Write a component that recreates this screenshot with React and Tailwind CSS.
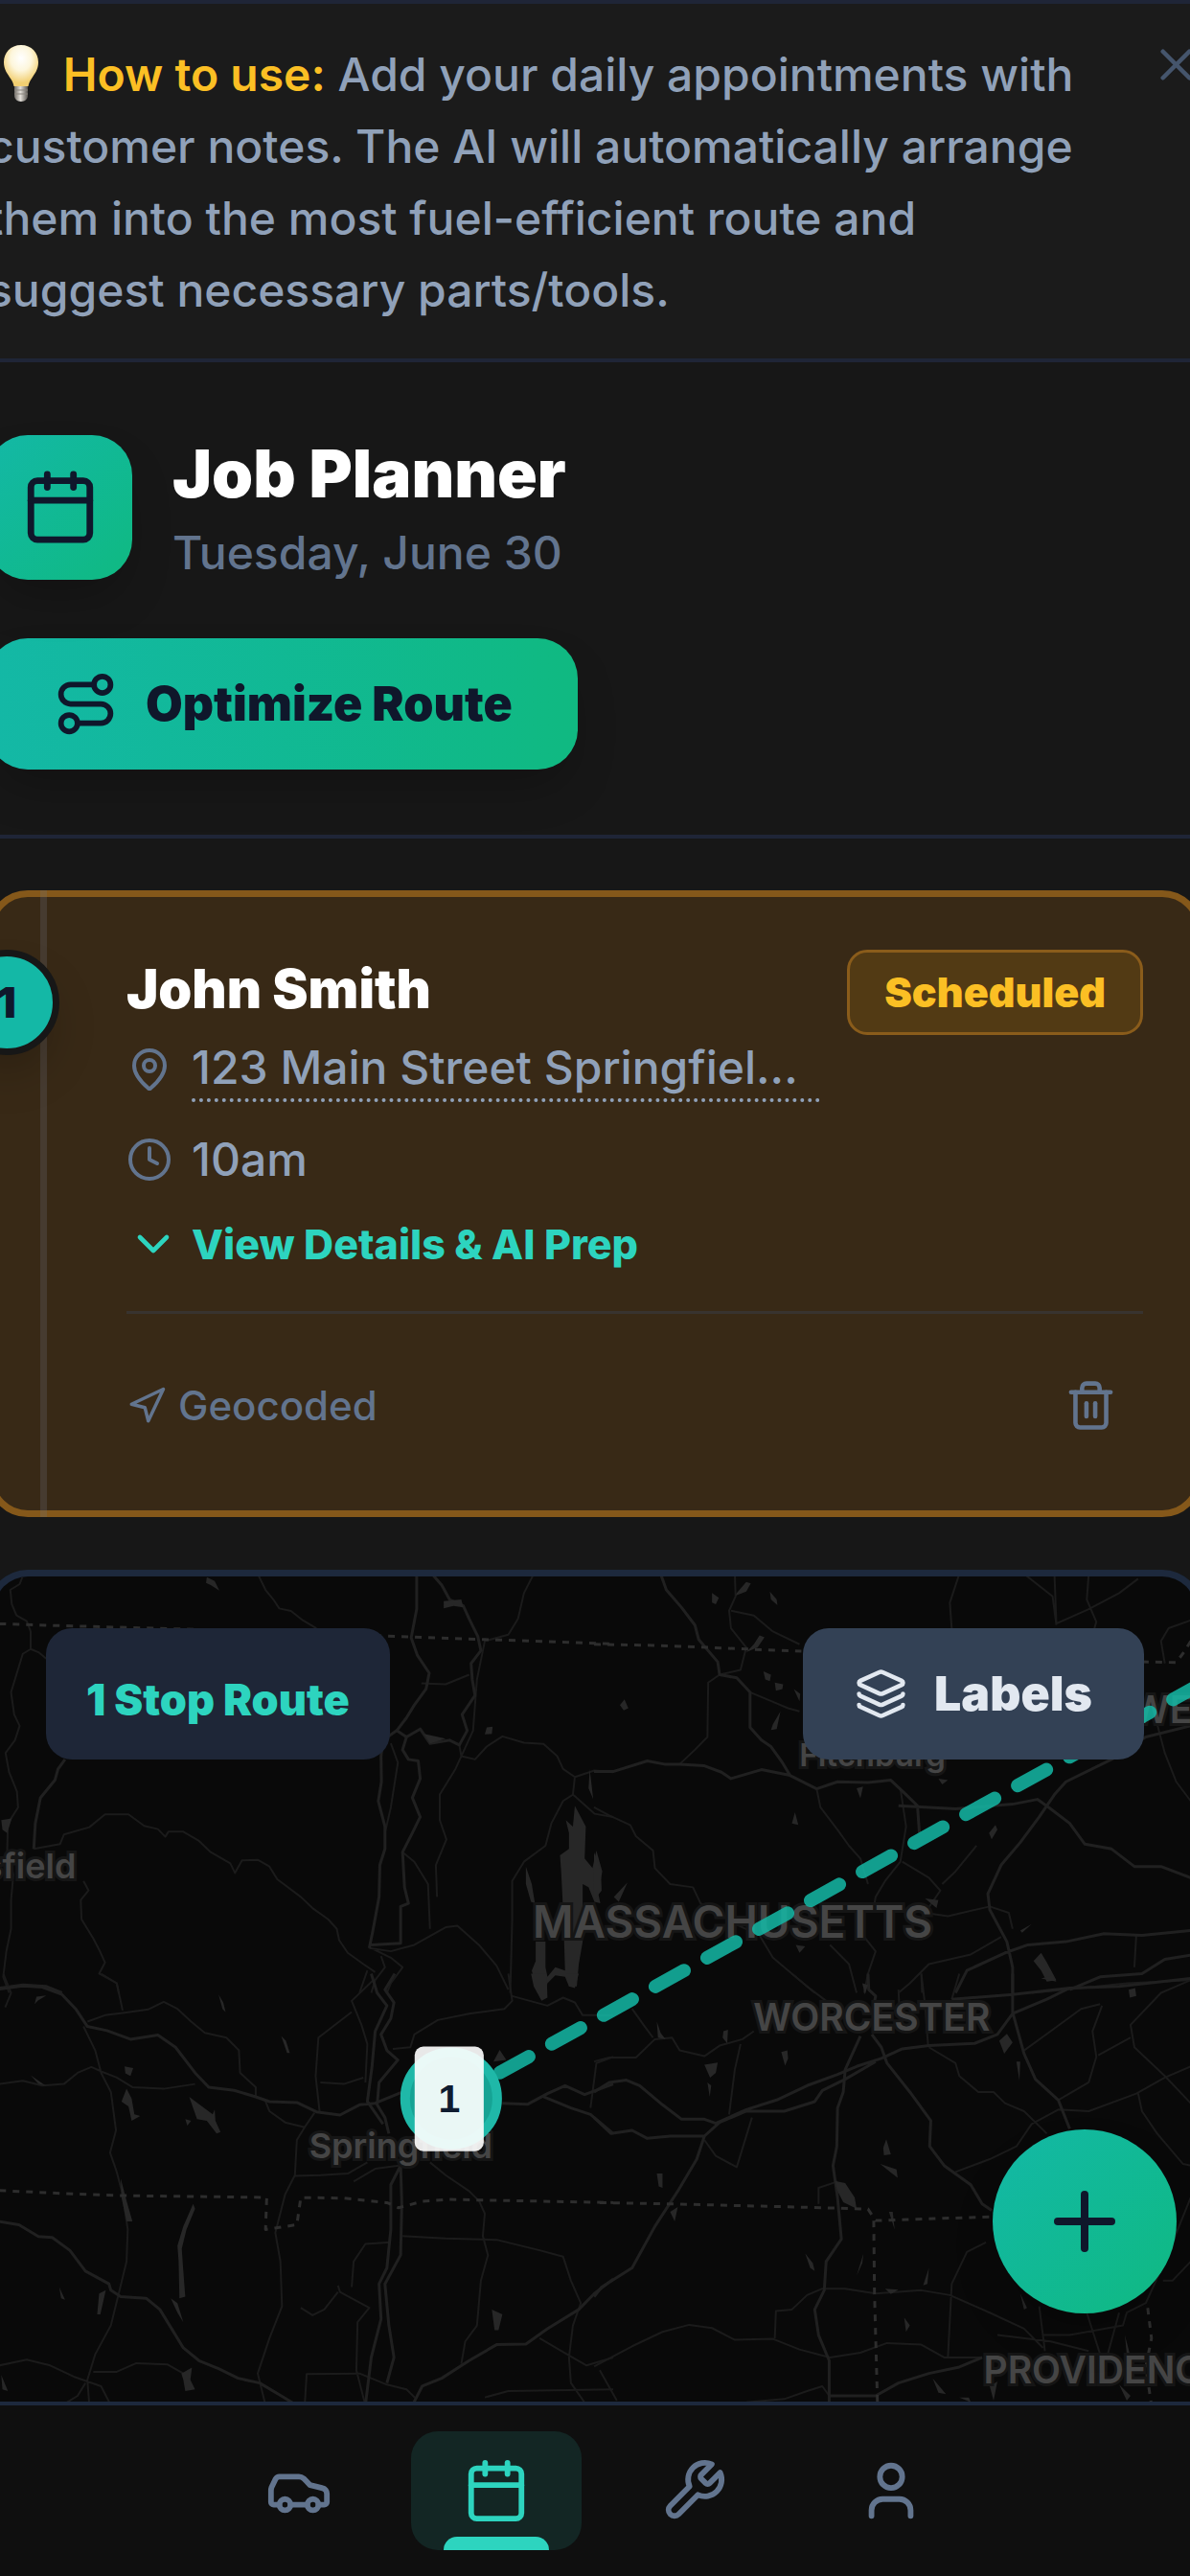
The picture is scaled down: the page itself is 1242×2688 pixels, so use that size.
import React from "react";
import {
  Calendar,
  Car,
  ChevronDown,
  Clock,
  Layers,
  MapPin,
  Navigation,
  Plus,
  Route,
  Trash2,
  User,
  X,
} from "lucide-react";

function WrenchIcon({ size = 24 }) {
  return (
    <svg
      width={size}
      height={size}
      viewBox="0 0 24 24"
      fill="none"
      stroke="currentColor"
      strokeWidth="2"
      strokeLinecap="round"
      strokeLinejoin="round"
      aria-hidden="true"
    >
      <path d="M14.7 6.3a1 1 0 0 0 0 1.4l1.6 1.6a1 1 0 0 0 1.4 0l3.77-3.77a6 6 0 0 1-7.94 7.94l-6.91 6.91a2.12 2.12 0 0 1-3-3l6.91-6.91a6 6 0 0 1 7.94-7.94l-3.76 3.76z" />
    </svg>
  );
}

const NAV_ITEMS = [
  { id: "vehicles", label: "Vehicles", icon: Car },
  { id: "planner", label: "Job planner", icon: Calendar },
  { id: "tools", label: "Tools", icon: WrenchIcon },
  { id: "account", label: "Account", icon: User },
];

// Base map in four tiles, each drawn in its own coordinate space.
const MAP_TILES = [
  {
    id: "nw",
    transform: "translate(0 1620) scale(0.40816 0.33333)",
    borders: "M0 226L130 231 540 245 980 264 1240 275 1568 289",
    major:
      "M1066 60V180L1052 270 1068 325 1098 380 1090 430 1060 480 1040 520 1015 560 980 590 975 640 976 720 968 780 985 860 985 930 972 980 970 1080 955 1180 945 1240M1105 70L1130 105 1150 150 1185 170 1200 210 1222 265 1230 310 1205 350 1208 400 1215 450 1182 510 1195 560 1175 605 1150 590 1100 600 1075 555 1040 580 1015 560M1040 580L1030 620 1045 650 1070 655 1075 710 1055 770 1075 830 1055 880 1030 940 1035 1050 1045 1100 1025 1110 1025 1225 950 1230M0 1365L60 1355 120 1360 160 1380M168 650L150 680 142 715 105 770 92 850 88 930",
    minor:
      "M62 70L52 102 28 120 32 165 44 200 70 218 80 250 80 305 60 320 45 380 30 440 38 510 52 545 40 590 16 630 25 690 45 750 48 800 22 850 20 940 36 1010 30 1090 30 1180 18 1250 10 1330 25 1380M80 305L100 315 120 335M88 930L155 915 165 885 230 862 270 822 330 822 370 858 405 868 424 892 432 876 470 876 510 905 540 940 590 975 602 1005 620 966 660 964 690 985 710 1025 770 1080 800 1115 840 1150 862 1180 868 1215 890 1255 930 1290 960 1315M660 70L680 120 700 150 715 178 745 186 775 215 810 240M1175 605L1180 640 1215 650 1245 610 1285 578 1340 598 1390 602 1425 640 1440 680 1470 705 1520 685 1568 690M945 1240L1000 1250 1060 1230 1140 1175 1170 1170 1225 1230 1270 1295 1300 1370M1365 70L1340 130 1325 210 1300 260 1240 280 1220 400 1210 560 1165 680 1125 760 1125 840 1142 900 1115 980 1118 1080M1470 705L1465 760 1440 780 1410 850 1395 920 1340 970 1310 1030 1310 1150 1305 1380M1465 760L1520 820 1568 830M950 1240L1000 1270 1030 1300 1000 1350 990 1380M975 1265L985 1300 960 1340 950 1380M940 1310L920 1380M215 1030L228 1060 208 1090 210 1150 240 1210 255 1245 270 1285 255 1320 300 1350 305 1380M1030 940L1060 970 1095 1040 1100 1180M1000 600L1018 660 1000 800 985 880M1200 385L1140 415 1078 412",
    water:
      "M1470 795L1498 860 1495 960 1515 990 1525 935 1540 1000 1530 1070 1535 1100 1520 1095 1505 1050 1490 1040 1490 1220 1480 1290 1475 1360 1455 1360 1445 1330 1420 1325 1400 1350 1395 1380H1375L1360 1310 1370 1280V1220H1395V1300L1400 1330 1420 1300 1445 1310 1440 1120 1435 1000 1432 950 1455 930 1455 880 1447 840 1465 860ZM1345 985L1360 1040 1368 1100 1358 1095 1345 1040ZM530 80L550 92 562 122 540 105 528 98ZM5 840L32 835 20 880 8 870ZM1508 680L1517 775 1505 740ZM1245 550L1260 548 1258 570 1240 572ZM1085 570L1140 585 1100 600ZM1135 155L1180 150 1185 175 1160 170 1135 178Z",
  },
  {
    id: "ne",
    transform: "translate(620 1620) scale(0.39668 0.33333)",
    borders: "M0 290L170 294 320 301 460 308 545 312M1440 345L1530 347 1550 315 1568 280",
    major:
      "M175 70L190 120 230 175 265 230 275 275 325 345 330 385 375 395 410 440 410 550 440 590 465 610 495 660 515 700 585 742 640 720 720 722 780 715 820 760 850 795 855 880M0 688L50 688 140 655 185 665 225 665 290 670 335 690 360 710 440 682 515 700M800 795L950 805 1100 790 1165 775 1195 800 1250 850 1290 915 1360 930 1420 985 1490 985 1568 1020M1568 545L1450 580 1360 650 1240 720 1210 760 1170 830 1120 910 1070 980 1035 1070 1040 1120 1085 1220 1100 1300 1100 1380M1568 1185L1440 1200 1340 1195 1240 1220 1140 1230 1080 1255 980 1310 950 1380M1568 1262L1500 1275 1440 1320 1330 1330 1250 1370",
    minor:
      "M370 70L372 140 355 185 360 240 400 300 385 370 330 385 300 410 298 580 265 620 225 665M360 185L420 200 470 250 540 290M0 800L40 825 95 855 110 890 155 935 160 990 200 1040 260 1050 280 1100 330 1130 380 1170 435 1200 470 1270 540 1340 580 1380M585 742L595 800 640 870 670 920 700 960 720 1040M410 440L460 465 510 490 540 500M1130 70L1205 140 1215 230M1210 70L1215 225 1300 180 1380 130 1430 85M1300 70L1295 150 1320 220 1315 240M960 70L935 160 940 240M1480 540L1500 630 1530 720 1568 780M1568 215L1510 240 1490 280 1500 350M805 740L820 860 805 970 765 1030 740 1080 735 1115M810 970L880 1020 910 1060 870 1130 930 1140 1040 1110 1090 1130 1100 1180M1005 920L950 1000 915 1040M1070 1205L990 1260 880 1290 830 1350 800 1380M1568 1340L1400 1350 1280 1365 1150 1380M700 1190L740 1250 720 1320 710 1380M620 1230L670 1290 690 1380M1425 1200L1420 1300M860 1320L862 1380",
    water:
      "M375 130L400 95 412 100 400 125 372 138ZM310 130L328 145 320 165 310 160ZM462 125L480 150 482 168 465 150ZM445 375L465 385 462 405 450 400ZM475 410L497 415 495 430 478 435ZM420 290L435 262 448 268 430 300 400 315ZM470 540L490 500 480 555 465 558ZM520 850L528 815 537 855ZM68 480L80 462 90 490 78 497ZM1038 880L1055 855 1060 870 1045 900ZM905 710L930 715 915 728ZM870 1085L905 1090 900 1115ZM1155 1280L1175 1255 1190 1285 1215 1340 1190 1345 1175 1310ZM530 1230L555 1235 540 1255ZM0 940L18 1000 20 1060 0 1090ZM52 1080L88 1035 65 1095ZM690 740L707 735 700 772ZM1120 1185L1150 1165 1125 1192ZM525 430L542 445 540 468Z",
  },
  {
    id: "sw",
    transform: "translate(0 2060) scale(0.40816 0.33333)",
    borders:
      "M0 678L160 687 320 694 640 699 683 700 680 800 760 785 770 700 880 702 990 716 1020 732 1080 712 1150 706 1568 716",
    major:
      "M0 48L60 38 110 42 160 65 195 110 225 165 275 178 335 205 405 192 450 230 500 310 535 355 600 365 655 385 690 400 760 403 810 432 870 442 920 410 960 405 1030 370M0 775L50 785 100 822 135 825 180 865 220 930 280 970 285 990 310 1010 375 1015 410 1050 440 1110 470 1170 510 1210 560 1235 610 1265 665 1280 720 1320 760 1350M1010 0L985 50 1008 90 1000 140 975 190 990 240 1018 270 970 340 965 410 985 450 995 500M950 0L965 60 990 100 960 180 952 290 940 400 980 470M1025 600L1000 660 1000 800 990 920 970 970 975 1080 950 1200 935 1350M1025 600L1028 720 1025 880 985 970 995 1100 1008 1200 990 1280M1568 955L1520 1000 1480 1050 1400 1110 1345 1158 1270 1160 1200 1210 1130 1265 1080 1290 1055 1350M1285 405L1350 408 1400 375 1445 350 1495 378 1568 345M1390 385L1460 420 1510 440 1568 500",
    minor:
      "M225 150L270 130 320 122 380 112 420 88 455 110 490 150 525 185 580 200 612 240 615 310 655 355 655 385M215 165L245 240 260 310 285 370 298 490 283 560 300 620 315 690 328 800 325 900 305 1000 285 1100 245 1190 225 1270 230 1350M0 345L60 335 110 350 165 345 200 310 235 292 265 308 300 325 340 355 420 360 500 345M680 400L690 430 730 465 780 480 805 435M780 480L760 520 755 630 730 690 705 810 718 900 722 1040 690 1140 660 1250 680 1350M240 1245L300 1245 350 1218 430 1222 470 1250M0 1225L70 1207 130 1225 190 1260 260 1290 285 1350M220 1280L200 1320 160 1350M955 20L900 85 925 160 940 220 935 340M900 120L815 200 808 320 818 430M820 340L880 345 930 325M755 632L820 630 890 625 940 590M905 650L960 610 1020 600M1030 820L1140 828 1270 832 1380 865 1440 885 1460 960 1485 1030 1465 1100 1455 1200 1460 1280 1500 1350M1100 590L1140 630 1200 680 1225 710 1240 750 1235 820 1248 880 1230 960 1220 1100 1190 1150 1180 1220M865 975L870 995 945 1045 915 1090 912 1240 935 1350M865 995L830 1050 800 1068 770 1045M780 1350L785 1252 920 1250 990 1285 1040 1300 1065 1330M1000 840L935 845 905 900 900 980M1005 235L1050 230 1060 190 1120 145 1200 125 1290 110 1310 85 1300 0M1310 70L1400 100 1440 75 1470 90 1490 130 1568 130M1380 1140L1450 1190 1500 1225 1568 1200M1240 1325L1300 1305 1568 1300M260 0L300 30 315 115M10 0L30 60 15 105M1568 260L1525 280 1510 420",
    water:
      "M495 720L500 735 478 800 466 860 470 930 475 1010 460 1015 458 900 455 850 470 790ZM325 360L338 390 345 440 360 445 338 460 330 415 312 400ZM485 385L545 440 550 425 552 460 565 495 555 500 530 460 505 455ZM310 640L325 710 340 775 325 775 312 700ZM720 195L732 210 742 248 735 248ZM560 65L572 90 578 120 570 110ZM320 290L342 295 335 320 322 312ZM90 95L95 72 120 68 98 85ZM80 318L118 350 100 345ZM465 1250L492 1232 488 1270 500 1300 475 1305 470 1270ZM5 1255L22 1305 8 1300ZM1258 1050L1285 1065 1275 1115 1265 1115ZM1262 275L1278 238 1295 270ZM1358 0H1398L1400 75 1385 85 1365 40ZM1450 0H1480L1470 45 1455 40ZM438 1015L455 1030 470 1090 455 1060ZM250 1065L255 1000 272 990 258 1065ZM153 980L168 1020 158 1015ZM475 455L490 460 480 475Z",
  },
  {
    id: "se",
    transform: "translate(620 2060) scale(0.39668 0.33333)",
    borders:
      "M15 716L200 720 440 727 600 732 720 736 740 772 1048 760M735 772L737 1000 745 1350M1455 1045L1465 1140 1450 1230 1465 1350",
    major:
      "M0 370L40 340 85 333 120 350 180 410 230 455 290 455 320 468 400 425 480 395 560 350 640 315 690 290 755 265 810 235 880 225 1000 218 1060 190 1100 125 1190 80 1250 45 1380 40 1568 15M0 450L45 500 100 490 140 515 200 508 290 508 330 465 400 430 500 430 580 400 600 365 660 330 740 275M290 508L270 580 220 680 160 790 100 920 20 980 0 1010M700 195L660 300 655 370 640 420 638 540 628 600 640 700 650 830 610 900 605 990 580 1050 590 1130 618 1210 618 1350M720 0L722 50 740 70 735 100M730 190L755 230 770 280 830 370 885 460 882 540 920 600 990 660 1020 720 1045 740M1100 0L1100 120 1130 250 1160 330 1220 395 1250 485M940 80L1100 65 1250 45M620 1320L740 1320 800 1280 880 1250 960 1230 1020 1200",
    minor:
      "M290 520L320 570 375 605 415 450M1220 395L1300 340 1320 260 1310 180 1335 100M1568 20L1490 60 1410 160 1420 230 1500 320 1568 405M1568 290L1500 325 1425 375 1300 430 1220 425 1150 470 1110 540 1040 580 950 620M880 230L950 280 960 320 1010 370 1050 370 1080 405 1130 430 1190 500M1430 375L1440 430 1480 500 1548 595 1568 600M0 275L40 262 110 262 160 205 205 200 225 240 290 258 330 225 390 205 420 180M385 220L370 300 355 440M100 110L130 160 155 200M520 0L560 40 610 85M0 1228L100 1165 180 1120 250 1098 310 1108 370 1145 470 1142 540 1175 620 1200 700 1185 770 1155 860 1160 920 1200 1020 1200M475 1140L478 1055 520 1050 560 1005 600 985 660 985 740 1000 860 990 935 1005 1040 1060 1130 1110 1180 1170M400 1340L500 1330 560 1305 600 1290 618 1320M1030 840L980 870 940 970 930 1200M1170 1040L1185 1180M1295 1060L1330 1190M1380 1060L1350 1190M1568 700L1500 900 1450 1030 1400 1060 1390 1100 1250 1130 1180 1130M1568 900L1520 960 1495 960M1060 1130L1200 1150 1300 1180M1130 240L1200 180 1280 110 1330 95M1325 255L1410 200M590 720L590 670 640 650M800 50L805 170M860 0L870 100 878 225M960 0L940 80M15 1240L60 1335",
    water:
      "M165 150L175 185 188 205 168 200ZM340 180L352 175 350 218 338 200ZM290 285L325 278 320 310 305 325ZM298 340L308 350 304 385ZM492 245L508 240 510 265 502 288ZM760 545L768 518 780 565 762 568ZM752 595L795 612 798 638 780 622ZM632 648L660 655 685 700 690 735 655 715 640 680ZM1065 210L1085 188 1100 215 1078 250ZM1110 275L1120 275 1118 335ZM165 625L180 625 180 670 170 665ZM200 745L220 730 212 775ZM775 745L785 745 790 800ZM555 875L575 905 580 930 568 920ZM690 945L708 875 705 905ZM865 975L880 920 876 970ZM765 985L800 988 780 1002ZM815 1075L830 1100 820 1120ZM1120 1000L1138 1045 1130 1050ZM1395 1130L1408 1190 1400 1190ZM890 1265L925 1315 905 1310ZM1040 1290L1060 1275 1050 1335ZM1380 1285L1410 1320 1400 1335ZM705 30L720 35 712 65ZM1405 50L1422 45 1425 70 1408 75ZM960 1325L985 1325 990 1340ZM1175 15L1205 5 1215 25Z",
  },
];

const PLACES = [
  { name: "Pittsfield", x: 80, y: 1961, anchor: "end", className: "text-[36px] font-semibold" },
  { name: "Fitchburg", x: 834, y: 1844, anchor: "start", className: "text-[33px] font-semibold" },
  { name: "LOWELL", x: 1130, y: 1799, anchor: "start", className: "text-[39px] font-semibold" },
  { name: "MASSACHUSETTS", x: 556, y: 2023, anchor: "start", className: "text-[46px] font-semibold" },
  { name: "WORCESTER", x: 786, y: 2119, anchor: "start", className: "text-[39px] font-semibold" },
  { name: "Springfield", x: 323, y: 2252, anchor: "start", className: "text-[36px] font-semibold" },
  { name: "PROVIDENCE", x: 1026, y: 2487, anchor: "start", className: "text-[39px] font-semibold" },
];

function BulbIcon() {
  return (
    <svg viewBox="0 0 64 64" className="inline h-16 w-[66px] align-[-14px]" aria-hidden="true">
      <defs>
        <radialGradient id="bulbGlass" cx="0.5" cy="0.32" r="0.6">
          <stop offset="0" stopColor="#ffffff" />
          <stop offset="0.5" stopColor="#fdf6dc" />
          <stop offset="1" stopColor="#f2cf72" />
        </radialGradient>
        <linearGradient id="bulbBase" x1="0" x2="1">
          <stop offset="0" stopColor="#6f6b66" />
          <stop offset="0.45" stopColor="#e4e0da" />
          <stop offset="1" stopColor="#57534e" />
        </linearGradient>
      </defs>
      <path
        d="M34 2C23 2 16 10 16 20c0 8 4 12 7 17 2 3 3 5 3.500 8h15c.5-3 1.500-5 3.500-8 3-5 7-9 7-17C52 10 45 2 34 2Z"
        fill="url(#bulbGlass)"
      />
      <path d="M27 45h14v10c0 3-3 6-7 6s-7-3-7-6Z" fill="url(#bulbBase)" />
      <path d="M27 49h14M27 53h14" stroke="#8a857e" strokeWidth="1" />
    </svg>
  );
}

function TipBanner() {
  return (
    <section className="border-y-4 border-[#1f2537] bg-[#1b1b1b]">
      <div className="-mx-[13px] flex items-start justify-between pt-9 pb-[34px]">
        <p className="max-w-[1145px] text-[48px] leading-[75px] font-medium text-slate-400">
          <BulbIcon /> <span className="font-semibold text-[#fbbf24]">How to use:</span> Add your daily appointments with
          customer notes. The AI will automatically arrange them into the most fuel-efficient route and suggest
          necessary parts/tools.
        </p>
        <button type="button" aria-label="Dismiss tip" className="shrink-0 text-slate-600">
          <X size={55} strokeWidth={2} />
        </button>
      </div>
    </section>
  );
}

function PlannerHeader() {
  return (
    <header className="border-b-4 border-[#1f2537]">
      <div className="-mx-[13px] pt-[75px] pb-[68px]">
        <div className="flex items-center gap-[42px]">
          <div className="flex size-[151px] items-center justify-center rounded-[42px] bg-linear-to-br from-[#14b8a6] to-[#10b981] text-slate-900 shadow-2xl">
            <Calendar size={82} />
          </div>
          <div>
            <h1 className="text-[69px] leading-[82px] font-black text-white">Job Planner</h1>
            <p className="mt-3.5 text-[48px] leading-14 font-medium text-slate-500">Tuesday, June 30</p>
          </div>
        </div>
        <button
          type="button"
          className="mt-[61px] flex h-[137px] items-center gap-7 rounded-[42px] bg-linear-to-r from-[#14b8a6] to-[#10b981] px-[68px] text-[50px] font-black text-slate-900 shadow-2xl"
        >
          <Route size={69} />
          Optimize Route
        </button>
      </div>
    </header>
  );
}

function JobCard() {
  return (
    <article className="relative rounded-[42px] border-[7px] border-[#85581a] bg-[#382916] py-[55px] pr-[55px] pl-[138px]">
      {/* route timeline and stop number */}
      <div className="absolute -inset-y-[7px] left-12 w-[7px] bg-[#71757f]/25" />
      <div className="absolute top-[55px] -left-[42px] flex size-[110px] items-center justify-center rounded-full border-[7px] border-[#171717] bg-[#14b8a6] text-[44px] font-black text-slate-900 shadow-2xl">
        1
      </div>

      <div className="flex items-start gap-7">
        <div className="min-w-0 flex-1">
          <h2 className="text-[56px] leading-[83px] font-black text-white">John Smith</h2>
          <div className="mt-2 flex items-center gap-5 text-slate-400">
            <MapPin size={48} className="shrink-0 text-slate-500" />
            <button
              type="button"
              className="min-w-0 flex-1 truncate border-b-4 border-dotted border-slate-400 text-left text-[48px] leading-16 font-medium"
            >
              123 Main Street Springfiel...
            </button>
          </div>
          <div className="mt-6 flex items-center gap-5 text-[48px] leading-[72px] font-medium text-slate-400">
            <Clock size={48} className="text-slate-500" />
            10am
          </div>
          <button
            type="button"
            className="mt-6 mb-[42px] flex items-center gap-3 text-[43px] leading-14 font-extrabold text-[#2dd4bf]"
          >
            <ChevronDown size={56} />
            View Details &amp; AI Prep
          </button>
        </div>
        <span className="flex h-[89px] items-center rounded-[21px] border-[3px] border-[#8a5c1b] bg-[#523a14] px-9 text-[43px] font-black text-[#fbbf24]">
          Scheduled
        </span>
      </div>

      <div className="flex items-center justify-between border-t-[3px] border-[#38332f] pt-[41px] text-slate-500">
        <div className="flex items-center gap-3 text-[42px] font-medium">
          <Navigation size={42} />
          Geocoded
        </div>
        <button type="button" aria-label="Delete job" className="p-[27px]">
          <Trash2 size={55} />
        </button>
      </div>
    </article>
  );
}

function RouteMap() {
  return (
    <section
      aria-label="Route map"
      className="relative mt-[55px] min-h-[600px] flex-1 overflow-hidden rounded-t-[42px] border-x-[7px] border-t-[7px] border-slate-800 bg-[#090909]"
    >
      <svg
        viewBox="-6 1646 1254 860"
        preserveAspectRatio="xMidYMin slice"
        className="absolute inset-0 size-full"
        fill="none"
      >
        {MAP_TILES.map((tile) => (
          <g key={tile.id} transform={tile.transform} strokeLinejoin="round">
            <path d={tile.minor} stroke="#1b1b1b" strokeWidth="2" vectorEffect="non-scaling-stroke" />
            <path d={tile.major} stroke="#202020" strokeWidth="3" vectorEffect="non-scaling-stroke" />
            <path d={tile.water} fill="#272727" />
            <path
              d={tile.borders}
              stroke="#2d2d2d"
              strokeWidth="3"
              strokeDasharray="7 7"
              vectorEffect="non-scaling-stroke"
            />
          </g>
        ))}
        {PLACES.map((place) => (
          <text
            key={place.name}
            x={place.x}
            y={place.y}
            textAnchor={place.anchor}
            fill="#454545"
            stroke="#151515"
            strokeWidth="6"
            paintOrder="stroke"
            className={place.className}
          >
            {place.name}
          </text>
        ))}
        <path
          d="M468 2193L1343 1708"
          stroke="#14b8a6"
          strokeOpacity="0.85"
          strokeWidth="14"
          strokeLinecap="round"
          strokeDasharray="34.3 27.4"
        />
        <circle cx="471" cy="2190" r="48" fill="#16a394" stroke="#1fb8a8" strokeWidth="10" />
        <rect x="433" y="2136" width="72" height="109" rx="9" fill="#ffffff" fillOpacity="0.91" />
        <text
          x="469"
          y="2204"
          textAnchor="middle"
          fill="#0f1c30"
          className="font-['Liberation_Sans',sans-serif] text-[41px] font-bold"
        >
          1
        </text>
      </svg>

      <div className="relative flex items-start justify-between p-[54px]">
        <div className="flex h-[137px] items-center rounded-[27px] bg-[#1e2637] px-[42px] pt-3 text-[45px] font-black text-[#2dd4bf]">
          1 Stop Route
        </div>
        <button
          type="button"
          className="flex h-[137px] items-center gap-7 rounded-[27px] bg-[#334155] px-[54px] text-[50px] font-black text-slate-200"
        >
          <Layers size={55} />
          Labels
        </button>
      </div>
    </section>
  );
}

function BottomNav({ active, onSelect }) {
  return (
    <nav className="sticky bottom-0 z-10 flex justify-center gap-7 border-t-4 border-slate-800 bg-[#0f0f0f] py-[27px]">
      {NAV_ITEMS.map(({ id, label, icon: Icon }) => {
        const isActive = id === active;
        return (
          <button
            key={id}
            type="button"
            aria-label={label}
            aria-current={isActive ? "page" : undefined}
            onClick={() => onSelect(id)}
            className={
              isActive
                ? "relative flex h-[124px] w-[178px] items-center justify-center overflow-hidden rounded-[28px] bg-[#132624] text-[#2dd4bf]"
                : "flex h-[124px] w-[178px] items-center justify-center rounded-[28px] text-slate-500"
            }
          >
            <Icon size={70} />
            {isActive ? <span className="absolute bottom-0 h-3.5 w-[110px] rounded-t-[14px] bg-[#2dd4bf]" /> : null}
          </button>
        );
      })}
    </nav>
  );
}

export default function App() {
  const [tab, setTab] = React.useState("planner");

  return (
    <div className="flex min-h-screen flex-col overflow-x-clip bg-[#171717] font-['Inter',sans-serif]">
      <TipBanner />
      <PlannerHeader />
      <main className="-mx-[13px] flex flex-1 flex-col pt-[54px]">
        <JobCard />
        <RouteMap />
      </main>
      <button
        type="button"
        aria-label="Add job"
        className="fixed right-3.5 bottom-[274px] z-20 flex size-48 items-center justify-center rounded-full bg-linear-to-br from-[#14b8a6] to-[#10b981] text-slate-900 shadow-2xl"
      >
        <Plus size={96} />
      </button>
      <BottomNav active={tab} onSelect={setTab} />
    </div>
  );
}
